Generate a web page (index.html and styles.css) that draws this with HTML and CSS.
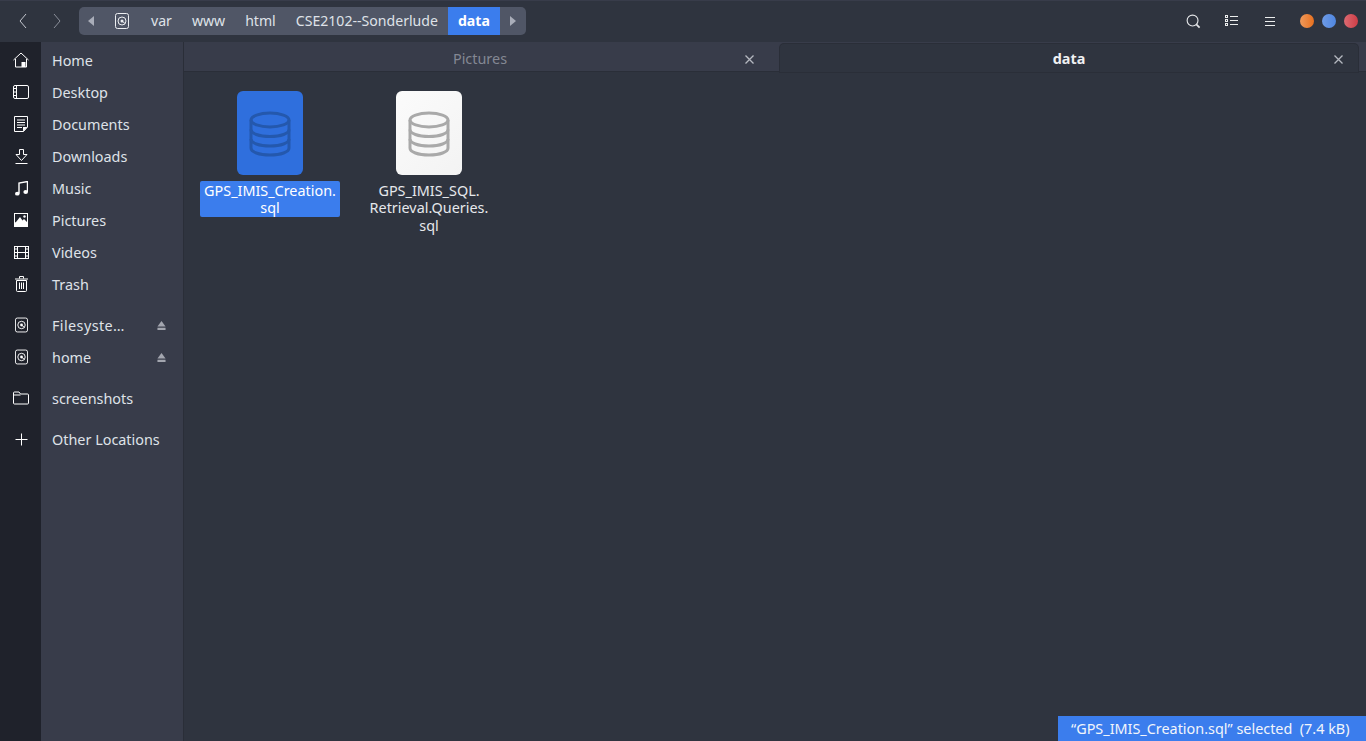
FILE: index.html
```html
<!DOCTYPE html>
<html lang="en">
<head>
<meta charset="utf-8">
<title>data</title>
<link rel="stylesheet" href="styles.css">
</head>
<body>
<svg class="defs" width="0" height="0" aria-hidden="true">
  <symbol id="disk" viewBox="0 0 14 16"><rect x="0.5" y="0.5" width="13" height="15" rx="2" fill="none" stroke="currentColor"/><circle cx="7" cy="8" r="4" fill="none" stroke="currentColor"/><circle cx="7" cy="8" r="1.5" fill="currentColor"/><path d="M7 8l3 2.5" stroke="currentColor"/></symbol>
  <symbol id="db" viewBox="0 0 42 46"><g fill="none" stroke="currentColor" stroke-width="3"><ellipse cx="21" cy="9" rx="19" ry="7"/><path d="M2 9v28c0 4 8 7 19 7s19-3 19-7V9"/><path d="M2 18.500c0 4 8 7 19 7s19-3 19-7"/><path d="M2 28c0 4 8 7 19 7s19-3 19-7"/></g></symbol>
  <symbol id="eject" viewBox="0 0 10 10"><path d="M5 0l4.500 6h-9z" fill="currentColor"/><rect x="0.500" y="7.500" width="9" height="2.500" fill="currentColor"/></symbol>
</svg>
<div class="app">
  <header class="topbar">
    <div class="nav">
      <svg class="nav-icon" viewBox="0 0 8 16"><path d="M7 1L1 8l6 7" fill="none" stroke="#c4c7cf" stroke-width="1"/></svg>
      <svg class="nav-icon dim" viewBox="0 0 8 16"><path d="M1 1l6 7-6 7" fill="none" stroke="#8b8f9a" stroke-width="1"/></svg>
    </div>
    <div class="path">
      <svg class="path-arrow" viewBox="0 0 6 10"><path d="M6 0v10L0 5z" fill="#a9adb9"/></svg>
      <svg class="path-disk"><use href="#disk"/></svg>
      <span class="crumb">var</span>
      <span class="crumb">www</span>
      <span class="crumb">html</span>
      <span class="crumb">CSE2102--Sonderlude</span>
      <span class="crumb active">data</span>
      <svg class="path-arrow end" viewBox="0 0 6 10"><path d="M0 0v10l6-5z" fill="#a9adb9"/></svg>
    </div>
    <div class="tools">
      <svg class="tool search" viewBox="0 0 16 16"><circle cx="7" cy="7" r="5.800" fill="none" stroke="#e4e5e8" stroke-width="1.200"/><path d="M11 11l3.500 3.500" stroke="#e4e5e8" stroke-width="1.800"/></svg>
      <svg class="tool list" viewBox="0 0 13 12"><g fill="none" stroke="#eceded"><rect x="0.500" y="0.500" width="2" height="2"/><rect x="0.500" y="4.500" width="2" height="2"/><rect x="0.500" y="8.500" width="2" height="2"/><path d="M5 1.500h8M5 5.500h8M5 9.500h8"/></g></svg>
      <svg class="tool menu" viewBox="0 0 10 11"><path d="M0 1.500h10M0 5.500h10M0 9.500h10" stroke="#eceded" fill="none"/></svg>
      <div class="wins">
        <span class="dot orange"></span>
        <span class="dot blue"></span>
        <span class="dot red"></span>
      </div>
    </div>
  </header>
  <div class="body">
    <aside class="side">
      <div class="group">
        <div class="row"><span class="ico"><svg width="16" height="16" viewBox="0 0 16 16"><path d="M0.500 8L8 1l7.500 7M2.500 7v8h11V7" fill="none" stroke="#fff"/><rect x="8.500" y="10" width="4" height="5" fill="#fff"/></svg></span><span class="lbl">Home</span></div>
        <div class="row"><span class="ico"><svg width="16" height="14" viewBox="0 0 16 14"><rect x="0.500" y="0.500" width="15" height="13" rx="1.500" fill="none" stroke="#fff"/><path d="M3.500 0.500v13M1 3.500h2.500M1 7h2.500M1 10.500h2.500" stroke="#fff" fill="none"/></svg></span><span class="lbl">Desktop</span></div>
        <div class="row"><span class="ico"><svg width="14" height="16" viewBox="0 0 14 16"><path d="M0.500 0.500h13v10.500l-4 4.500h-9z" fill="none" stroke="#fff"/><path d="M3 4h8M3 6.500h8M3 9h8M3 11.500h5" stroke="#fff"/><path d="M9 15.500v-4.500h4.500z" fill="#fff"/></svg></span><span class="lbl">Documents</span></div>
        <div class="row"><span class="ico"><svg width="13" height="15" viewBox="0 0 13 15"><path d="M4.500 0.500h4v5h3.500l-5.500 6-5.500-6h3.500z" fill="none" stroke="#fff"/><path d="M0.500 14.500h12" stroke="#fff"/></svg></span><span class="lbl">Downloads</span></div>
        <div class="row"><span class="ico"><svg width="13" height="15" viewBox="0 0 13 15"><path d="M4 12.500V2l8.500-1.500V11" fill="none" stroke="#fff" stroke-width="1.400"/><ellipse cx="2.300" cy="12.700" rx="2.300" ry="1.900" fill="#fff"/><ellipse cx="10.700" cy="11" rx="2.300" ry="1.900" fill="#fff"/></svg></span><span class="lbl">Music</span></div>
        <div class="row"><span class="ico"><svg width="14" height="14" viewBox="0 0 14 14"><path fill-rule="evenodd" d="M0 0h14v14H0zM1 1v8.500h12V1z" fill="#fff"/><path d="M1 10h12V9L10 6 8.500 7.500 6 4 2 9z" fill="#fff"/><circle cx="10.500" cy="3.500" r="1.200" fill="#fff"/></svg></span><span class="lbl">Pictures</span></div>
        <div class="row"><span class="ico"><svg width="15" height="13" viewBox="0 0 15 13"><rect x="0.500" y="0.500" width="14" height="12" fill="none" stroke="#fff"/><path d="M3.500 0.500v12M11.500 0.500v12M3.500 6.500h8M0 3h3M0 6.500h3M0 10h3M12 3h3M12 6.500h3M12 10h3" stroke="#fff" fill="none"/></svg></span><span class="lbl">Videos</span></div>
        <div class="row"><span class="ico"><svg width="13" height="16" viewBox="0 0 13 16"><path d="M1.500 4.500v10a1 1 0 0 0 1 1h8a1 1 0 0 0 1-1v-10zM0 3h13M4.500 2.500V0.500h4v2M4.500 6.500v6.500M6.500 6.500v6.500M8.500 6.500v6.500" fill="none" stroke="#fff"/></svg></span><span class="lbl">Trash</span></div>
      </div>
      <div class="group">
        <div class="row"><span class="ico white"><svg width="13" height="16"><use href="#disk"/></svg></span><span class="lbl wide">Filesyste…</span><svg class="eject"><use href="#eject"/></svg></div>
        <div class="row"><span class="ico white"><svg width="13" height="16"><use href="#disk"/></svg></span><span class="lbl">home</span><svg class="eject"><use href="#eject"/></svg></div>
      </div>
      <div class="group">
        <div class="row"><span class="ico"><svg width="16" height="14" viewBox="0 0 16 14"><path d="M0.500 2a1 1 0 0 1 1-1H6l1.500 2h7a1 1 0 0 1 1 1v8a1 1 0 0 1-1 1h-13a1 1 0 0 1-1-1zM0.500 4H7.500" fill="none" stroke="#fff"/></svg></span><span class="lbl">screenshots</span></div>
      </div>
      <div class="group">
        <div class="row"><span class="ico"><svg width="13" height="13" viewBox="0 0 13 13"><path d="M6.500 0.500v12M0.500 6.500h12" stroke="#fff"/></svg></span><span class="lbl">Other Locations</span></div>
      </div>
    </aside>
    <main class="main">
      <div class="tabs">
        <div class="tab"><span class="tab-title">Pictures</span><svg class="tab-x" viewBox="0 0 9 9"><path d="M0.500 0.500l8 8M8.500 0.500l-8 8" stroke="#b5b8c0" stroke-width="1.300"/></svg></div>
        <div class="tab current"><span class="tab-title">data</span><svg class="tab-x" viewBox="0 0 9 9"><path d="M0.500 0.500l8 8M8.500 0.500l-8 8" stroke="#b5b8c0" stroke-width="1.300"/></svg></div>
        <div class="tab-rest"></div>
      </div>
      <section class="files">
        <div class="file selected">
          <div class="page"><svg class="db"><use href="#db"/></svg></div>
          <div class="name">GPS_IMIS_Creation.<br>sql</div>
        </div>
        <div class="file">
          <div class="page"><svg class="db"><use href="#db"/></svg></div>
          <div class="name">GPS_IMIS_SQL.<br>Retrieval.Queries.<br>sql</div>
        </div>
      </section>
      <div class="status">“GPS_IMIS_Creation.sql” selected&nbsp; (7.4 kB)</div>
    </main>
  </div>
</div>
</body>
</html>
```
FILE: styles.css
```css
* { box-sizing: border-box; }
html, body { margin: 0; height: 100%; }
body {
  background: #2f343f;
  color: #d3dae3;
  font-family: "Noto Sans", "Open Sans", sans-serif;
  font-size: 14.400px;
  overflow: hidden;
}
.defs { position: absolute; }
.app { display: flex; flex-direction: column; height: 741px; }

.topbar {
  display: flex;
  align-items: center;
  height: 42px;
  flex: none;
  background: #2f343f;
  box-shadow: inset 0 1px 0 #383c4a;
}
.nav { display: flex; width: 79px; padding-left: 19px; gap: 26px; }
.nav-icon { width: 8px; height: 16px; }
.path {
  display: flex;
  align-items: center;
  height: 28px;
  width: 447px;
  background: #505666;
  border-radius: 5px;
  overflow: hidden;
  color: #dfe2e8;
}
.path-arrow { width: 6px; height: 10px; margin-left: 9px; flex: none; }
.path-arrow.end { margin-left: 10px; }
.path-disk { width: 14px; height: 16px; margin-left: 21px; margin-right: 12px; color: #eceef1; flex: none; }
.crumb { padding: 0 10px; line-height: 28px; white-space: nowrap; font-size: 14.100px; }
.crumb.active { background: #3b7ded; color: #fff; font-weight: 700; }
.tools { margin-left: auto; display: flex; align-items: center; }
.tool { flex: none; }
.search { width: 15px; height: 15px; }
.list { width: 13px; height: 12px; margin-left: 24px; }
.menu { width: 10px; height: 11px; margin-left: 27px; }
.wins { display: flex; gap: 8px; margin-left: 25px; margin-right: 8px; }
.dot { width: 14px; height: 14px; border-radius: 50%; }
.orange { background: linear-gradient(90deg, #ef9a5c, #e8701f); }
.blue { background: linear-gradient(90deg, #6f9be6, #4f86e0); }
.red { background: linear-gradient(90deg, #dc6a72, #cf3d46); }

.body { display: flex; flex: 1; min-height: 0; }
.side {
  width: 184px;
  flex: none;
  background: linear-gradient(90deg, #1f222b 0, #1f222b 41px, #383c4a 41px, #383c4a 183px, #2a2e38 183px);
  padding-top: 2px;
}
.group { margin-bottom: 9px; }
.row { display: flex; align-items: center; height: 32px; }
.ico { width: 42px; flex: none; display: flex; justify-content: center; align-items: center; }
.ico.white { color: #fff; }
.lbl { margin-left: 10px; color: #dfe2e8; white-space: nowrap; }
.lbl.wide { letter-spacing: 0.400px; }
.eject { width: 9px; height: 9px; margin-left: auto; margin-right: 18px; color: #a3a6af; }

.main { flex: 1; min-width: 0; position: relative; }
.tabs { display: flex; height: 30px; background: #383c4a; box-shadow: inset 0 -1px 0 #2a2e38; }
.tab {
  width: 596px;
  flex: none;
  display: flex;
  align-items: center;
  justify-content: center;
  position: relative;
  padding: 2px 4px 0 0;
  color: #848894;
}
.tab.current {
  width: 578px;
  margin-top: 2px;
  padding: 0;
  background: #2f343f;
  color: #f0f1f3;
  font-weight: 700;
  border-radius: 4px 4px 0 0;
  box-shadow: 0 0 0 1px #2a2e38;
}
.tab-rest { flex: 1; }
.tab-x { position: absolute; right: 26px; top: 13px; width: 9px; height: 9px; }
.tab.current .tab-x { right: 15px; top: 11px; }

.files { display: flex; gap: 19px; padding: 19px 0 0 16px; }
.file { width: 140px; display: flex; flex-direction: column; align-items: center; }
.page {
  width: 66px;
  height: 84px;
  border-radius: 6px;
  background: linear-gradient(135deg, #fbfbfb, #f3f3f3);
  display: flex;
  align-items: center;
  justify-content: center;
  padding-top: 2px;
  color: #a9a9a9;
}
.selected .page { background: #2f6fdd; color: #2458ad; }
.db { width: 42px; height: 46px; }
.name {
  width: 140px;
  margin-top: 6px;
  padding-top: 0.500px;
  padding-bottom: 0.500px;
  text-align: center;
  line-height: 17.500px;
  color: #e6e8ec;
  border-radius: 2px;
}
.selected .name { background: #3b7ded; color: #fff; }

.status {
  position: absolute;
  right: 0;
  bottom: 0;
  width: 308px;
  height: 25px;
  background: #3b7ded;
  color: #f2f5fb;
  line-height: 25px;
  padding-left: 13px;
  white-space: nowrap;
}
```
